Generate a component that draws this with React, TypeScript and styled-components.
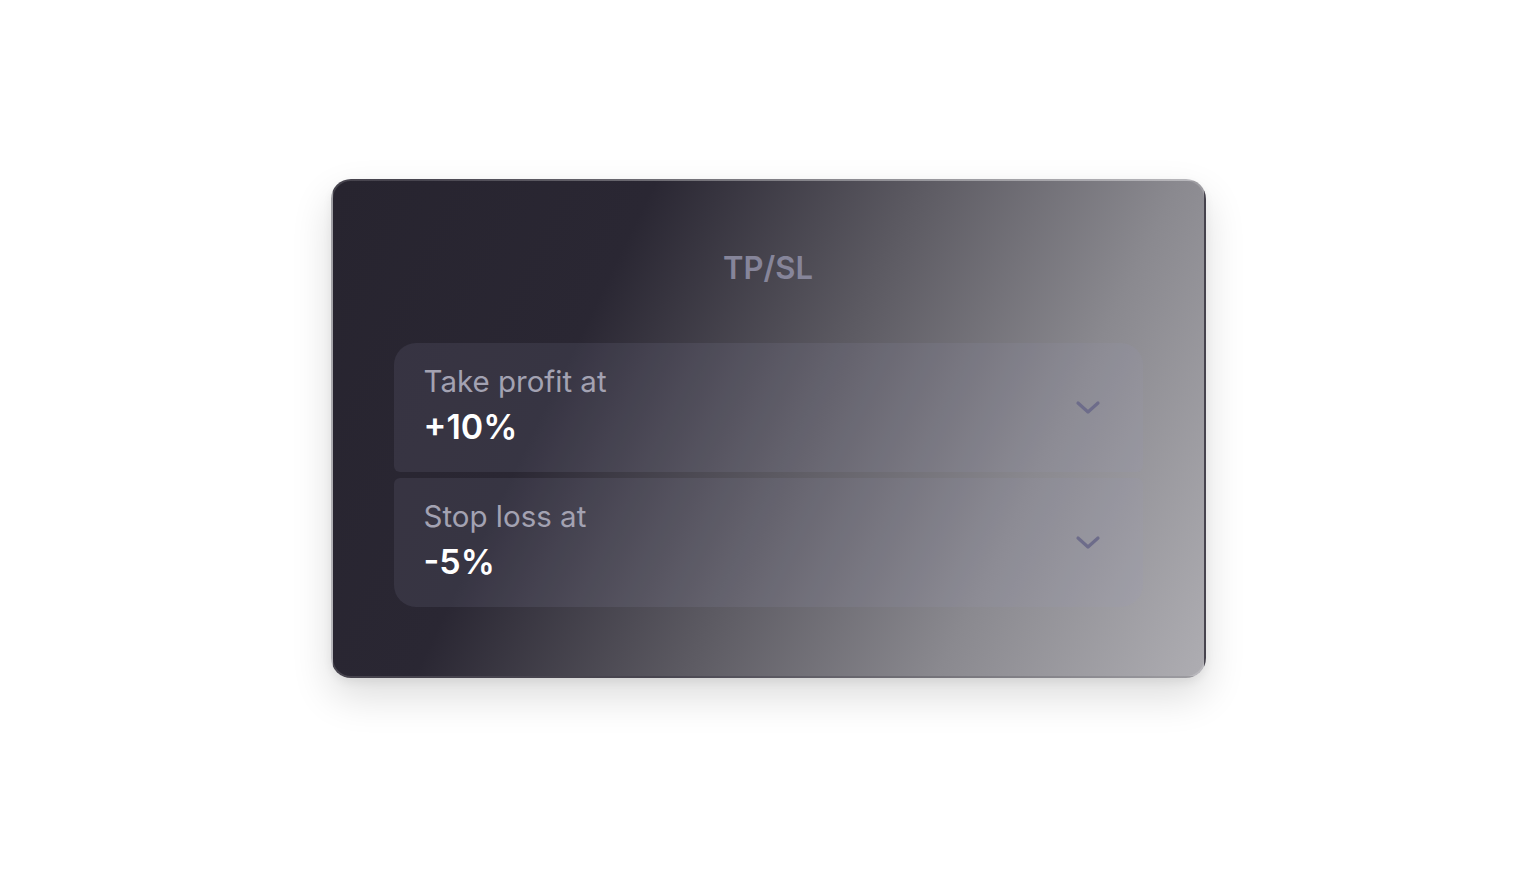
import React from 'react';
import styled, { createGlobalStyle } from 'styled-components';

const GlobalStyle = createGlobalStyle`
    html, body {
        margin: 0;
        padding: 0;
        background: #ffffff;
        font-family: Inter, 'Noto Sans', sans-serif;
    }
`;

const Page = styled.div`
    width: 1536px;
    height: 885px;
    display: flex;
    justify-content: center;
    padding-top: 179px;
    box-sizing: border-box;
`;

const Card = styled.div`
    width: 875px;
    height: 499px;
    box-sizing: border-box;
    border-radius: 20px;
    border: 2px solid rgba(255, 255, 255, 0.14);
    background: linear-gradient(116deg, #27242f 0%, #2a2733 29%, #5c5a62 53%, #8a898f 76%, #aeadb2 100%);
    box-shadow: 0 18px 40px rgba(0, 0, 0, 0.14), 0 4px 10px rgba(0, 0, 0, 0.06);
    padding: 61px 61px 0;
    display: flex;
    flex-direction: column;
`;

const Title = styled.h2`
    margin: 0;
    text-align: center;
    font-size: 31px;
    font-weight: 600;
    line-height: 52px;
    color: #86859a;
`;

const List = styled.div`
    margin-top: 49px;
    display: flex;
    flex-direction: column;
    gap: 6px;
`;

const Row = styled.div<{ $first?: boolean }>`
    height: 129px;
    box-sizing: border-box;
    padding: 0 42px 6px 30px;
    display: flex;
    align-items: center;
    justify-content: space-between;
    background: rgba(160, 158, 190, 0.12);
    border-radius: ${(p) => (p.$first ? '22px 22px 6px 6px' : '6px 6px 22px 22px')};
`;

const Texts = styled.div`
    display: flex;
    flex-direction: column;
`;

const Label = styled.span`
    font-size: 29.5px;
    line-height: 36px;
    color: #a3a2b2;
    font-weight: 400;
`;

const Value = styled.span`
    margin-top: 8px;
    font-size: 34px;
    line-height: 40px;
    color: #ffffff;
    font-weight: 600;
`;

const ChevronBox = styled.span`
    display: flex;
    margin-top: 6px;
`;

const Chevron = () => (
    <ChevronBox>
        <svg width="26" height="16" viewBox="0 0 26 16" fill="none">
            <path d="M3 3 L13 12 L23 3" stroke="#6d6c8a" strokeWidth="3.2" strokeLinecap="round" strokeLinejoin="round" />
        </svg>
    </ChevronBox>
);

const rows = [
    { label: 'Take profit at', value: '+10%' },
    { label: 'Stop loss at', value: '-5%' },
];

const App: React.FC = () => {
    return (
        <Page>
            <GlobalStyle />
            <Card>
                <Title>TP/SL</Title>
                <List>
                    {rows.map((r, i) => (
                        <Row key={r.label} $first={i === 0}>
                            <Texts>
                                <Label>{r.label}</Label>
                                <Value>{r.value}</Value>
                            </Texts>
                            <Chevron />
                        </Row>
                    ))}
                </List>
            </Card>
        </Page>
    );
};

export default App;
